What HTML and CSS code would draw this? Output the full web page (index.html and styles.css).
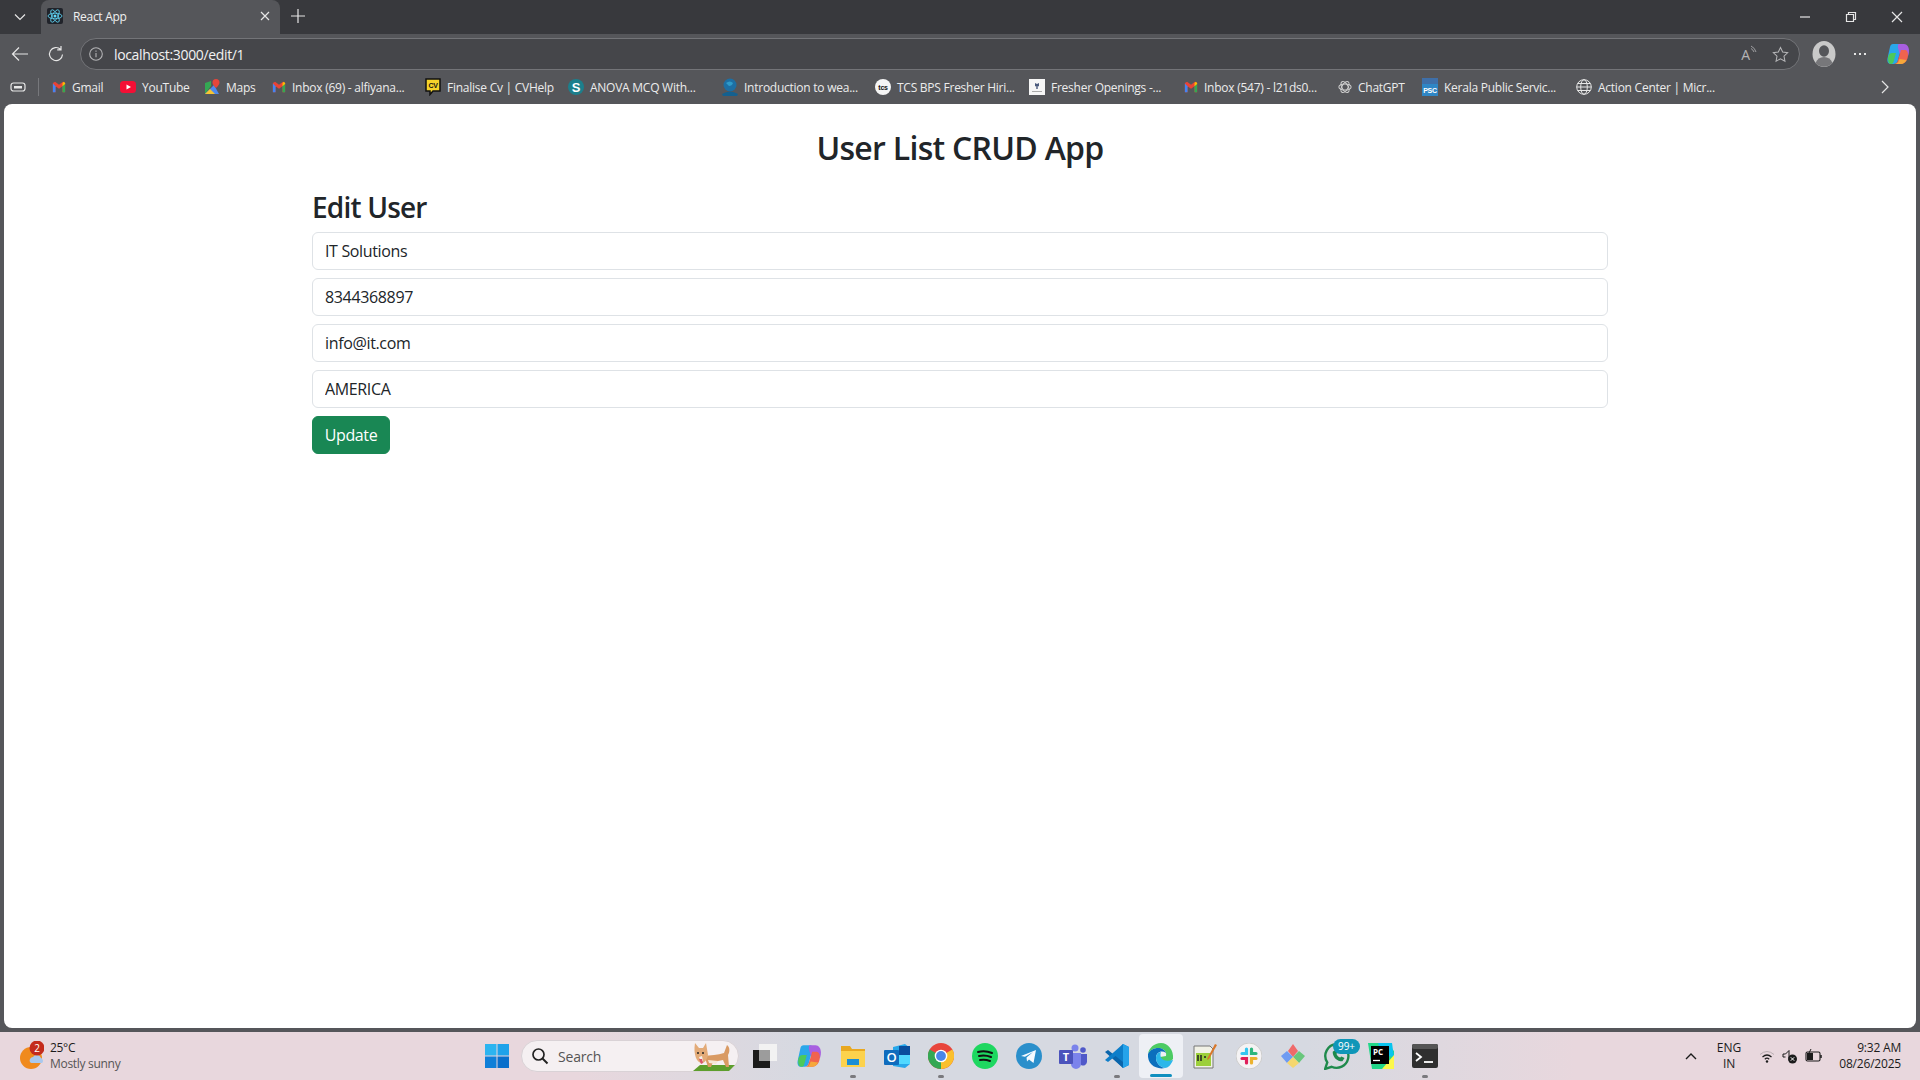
FILE: index.html
```html
<!DOCTYPE html>
<html lang="en">
<head>
    <meta charset="UTF-8">
    <title>React App</title>
    <link rel="stylesheet" href="styles.css">
</head>
<body>
    <div class="tabstrip">
        <div class="tab-menu">
            <svg width="14" height="14" viewBox="0 0 14 14"><path d="M2 4.500l5 5 5-5" class="line"/></svg>
        </div>
        <div class="tab">
            <svg class="favicon" width="16" height="16" viewBox="0 0 16 16">
                <rect width="16" height="16" rx="2" fill="#20232a"/>
                <circle cx="8" cy="8" r="1.500" fill="#61dafb"/>
                <g fill="none" stroke="#61dafb" stroke-width="0.8">
                    <ellipse cx="8" cy="8" rx="7" ry="2.800"/>
                    <ellipse cx="8" cy="8" rx="7" ry="2.800" transform="rotate(60 8 8)"/>
                    <ellipse cx="8" cy="8" rx="7" ry="2.800" transform="rotate(120 8 8)"/>
                </g>
            </svg>
            <span class="tab-title">React App</span>
            <svg width="10" height="10" viewBox="0 0 10 10"><path d="M1 1l8 8M9 1l-8 8" class="line"/></svg>
        </div>
        <div class="new-tab">
            <svg width="16" height="16" viewBox="0 0 16 16"><path d="M8 1v14M1 8h14" class="line"/></svg>
        </div>
        <div class="window-controls">
            <svg width="12" height="12" viewBox="0 0 12 12"><path d="M1 6h10" class="line"/></svg>
            <svg width="12" height="12" viewBox="0 0 12 12"><path d="M1.500 3.500h7v7h-7zM3.500 3.500v-2h7v7h-2" class="line"/></svg>
            <svg width="12" height="12" viewBox="0 0 12 12"><path d="M1 1l10 10M11 1l-10 10" class="line"/></svg>
        </div>
    </div>

    <div class="toolbar">
        <svg class="nav-icon" width="18" height="18" viewBox="0 0 18 18"><path d="M17 9H1.500M8 2.500L1.500 9 8 15.500" class="line"/></svg>
        <svg class="nav-icon" width="18" height="18" viewBox="0 0 18 18"><path d="M15.500 9.500a6.500 6.500 0 1 1-2-5.200M14 1v3.800h-3.800" class="line"/></svg>
        <div class="address-bar">
            <svg width="14" height="14" viewBox="0 0 14 14"><circle cx="7" cy="7" r="6.300" class="line-info"/><path d="M7 6v4.200M7 3.600v1.100" class="line-info"/></svg>
            <span class="url">localhost:3000/edit/1</span>
            <span class="read-aloud">A<svg width="8" height="10" viewBox="0 0 8 10"><path d="M1 1q4 2 5 6M1 3.500q2 1 3 3.500" class="line-thin"/></svg></span>
            <svg width="17" height="17" viewBox="0 0 18 18"><path d="M9 1.500l2.300 4.900 5.300.7-3.900 3.700 1 5.300L9 13.500l-4.700 2.600 1-5.300L1.400 7.100l5.300-.7z" class="line-info"/></svg>
        </div>
        <div class="toolbar-right">
            <svg width="24" height="26" viewBox="0 0 24 26">
                <ellipse cx="12" cy="13" rx="11.500" ry="13" fill="#c9c9c9"/>
                <ellipse cx="12" cy="10" rx="5" ry="5.800" fill="#55565a"/>
                <path d="M3.500 22c1.500-4 4.500-6 8.500-6s7 2 8.500 6a12 13 0 0 1-17 0z" fill="#77777a"/>
            </svg>
            <span class="dots"><i></i><i></i><i></i></span>
            <svg width="24" height="24" viewBox="0 0 24 24"><use href="#copilot-icon"/></svg>
        </div>
    </div>

    <div class="bookmarks">
        <svg class="collections" width="16" height="14" viewBox="0 0 16 14"><rect x="1" y="3" width="14" height="8" rx="2.500" class="line"/><path d="M4 6h8v2.500H4z" fill="#e8e8e8"/></svg>
        <span class="bookmark-divider"></span>

        <div class="bookmark b-gmail"><svg width="14" height="14" viewBox="0 0 16 16"><use href="#gmail-icon"/></svg>Gmail</div>
        <div class="bookmark b-youtube"><svg width="16" height="14" viewBox="0 0 16 14"><rect y="1" width="16" height="12" rx="3.500" fill="#f40f35"/><path d="M6.500 4.500L11 7l-4.500 2.500z" fill="#fff"/></svg>YouTube</div>
        <div class="bookmark b-maps"><svg width="16" height="16" viewBox="0 0 16 16"><path d="M1 15V4l6-2v5z" fill="#34a853"/><path d="M1 15l9-9 5 9z" fill="#4d8af0"/><path d="M1 15l5-5 5 5z" fill="#f7c531"/><path d="M12 0a3.500 3.500 0 0 0-3.500 3.500C8.500 6 12 9 12 9s3.500-3 3.500-5.500A3.500 3.500 0 0 0 12 0z" fill="#e5463b"/></svg>Maps</div>
        <div class="bookmark b-inbox"><svg width="14" height="14" viewBox="0 0 16 16"><use href="#gmail-icon"/></svg>Inbox (69) - alfiyana...</div>
        <div class="bookmark b-cvhelp"><svg width="16" height="18" viewBox="0 0 16 18"><path d="M1 1h14v12H8l-3 3.500V13H1z" fill="#f6d42a" stroke="#111" stroke-width="1.500"/><text x="8" y="10" class="icon-text">CV</text></svg>Finalise Cv | CVHelp</div>
        <div class="bookmark b-anova"><svg width="16" height="16" viewBox="0 0 16 16"><circle cx="8" cy="8" r="8" fill="#1c7f8c"/><text x="8" y="12.500" class="anova-s">S</text></svg>ANOVA MCQ With...</div>
        <div class="bookmark b-intro"><svg width="16" height="18" viewBox="0 0 16 18"><circle cx="8" cy="7" r="6.500" fill="#1d6fa4"/><path d="M0 16q8-5 16 0l-1 2H1z" fill="#14608f"/><path d="M4 5q4-3 7 0-1 3-4 3z" fill="#2f9bc9"/></svg>Introduction to wea...</div>
        <div class="bookmark b-tcs"><svg width="16" height="16" viewBox="0 0 16 16"><circle cx="8" cy="8" r="8" fill="#f5f5f5"/><text x="8" y="10.500" class="icon-text">tcs</text></svg>TCS BPS Fresher Hiri...</div>
        <div class="bookmark b-fresher"><svg width="16" height="16" viewBox="0 0 16 16"><rect width="16" height="16" fill="#f6f6f6"/><path d="M6 4l2 1 2-1v3L8 8 6 7zM7.300 8h1.400v2H7.300z" fill="#4a5a7c"/><path d="M3 12.500h10" stroke="#aaa"/></svg>Fresher Openings -...</div>
        <div class="bookmark b-inbox2"><svg width="14" height="14" viewBox="0 0 16 16"><use href="#gmail-icon"/></svg>Inbox (547) - l21ds0...</div>
        <div class="bookmark b-chatgpt"><svg width="14" height="14" viewBox="0 0 16 16"><g fill="none" stroke="#cfcfcf" stroke-width="1.200"><ellipse cx="8" cy="8" rx="7" ry="3.500"/><ellipse cx="8" cy="8" rx="7" ry="3.500" transform="rotate(60 8 8)"/><ellipse cx="8" cy="8" rx="7" ry="3.500" transform="rotate(120 8 8)"/></g></svg>ChatGPT</div>
        <div class="bookmark b-kerala"><svg width="16" height="18" viewBox="0 0 16 18"><rect width="16" height="18" fill="#2f86c5"/><rect width="16" height="6" fill="#3f6fa8"/><text x="8" y="15" class="psc-text">PSC</text></svg>Kerala Public Servic...</div>
        <div class="bookmark b-action"><svg width="16" height="16" viewBox="0 0 16 16"><g fill="none" stroke="#e6e6e6" stroke-width="1"><circle cx="8" cy="8" r="7.300"/><ellipse cx="8" cy="8" rx="3.300" ry="7.300"/><path d="M.7 8h14.600M1.700 4.500h12.600M1.700 11.500h12.600"/></g></svg>Action Center | Micr...</div>
        <svg class="bookmark-more" width="10" height="14" viewBox="0 0 10 14"><path d="M2 1l6 6-6 6" class="line"/></svg>
    </div>

    <div class="page">
        <div class="container">
            <h1>User List CRUD App</h1>
            <h2>Edit User</h2>
            <form class="user-form">
                <input class="form-control" type="text" value="IT Solutions">
                <input class="form-control" type="text" value="8344368897">
                <input class="form-control" type="text" value="info@it.com">
                <input class="form-control" type="text" value="AMERICA">
                <div><button class="btn-update" type="button">Update</button></div>
            </form>
        </div>
    </div>

    <div class="taskbar">
        <div class="weather">
            <svg class="weather-icon" width="24" height="30" viewBox="0 0 24 30">
                <circle cx="11" cy="17" r="11" fill="#f08a1d"/>
                <path d="M10 21a3.500 3.500 0 0 1 3-5 4.500 4.500 0 0 1 8 1 3 3 0 0 1 1 5H12a2 2 0 0 1-2-1z" fill="#a9c8ee"/>
                <circle cx="17" cy="7" r="7.500" fill="#c42b1c"/>
                <text x="17" y="10.500" class="weather-badge">2</text>
            </svg>
            <div class="weather-text">
                <span class="temp">25°C</span>
                <span class="sky">Mostly sunny</span>
            </div>
        </div>

        <div class="task-center">
            <svg class="start" width="24" height="24" viewBox="0 0 24 24">
                <rect width="11.500" height="11.500" fill="#2cb4f0"/>
                <rect x="12.500" width="11.500" height="11.500" fill="#1fa2ea"/>
                <rect y="12.500" width="11.500" height="11.500" fill="#0f7fd8"/>
                <rect x="12.500" y="12.500" width="11.500" height="11.500" fill="#0a6fcb"/>
            </svg>
            <div class="search-box">
                <svg width="18" height="18" viewBox="0 0 18 18"><circle cx="7.500" cy="7.500" r="5.500" fill="none" stroke="#222" stroke-width="1.700"/><path d="M11.500 11.500l5 5" stroke="#222" stroke-width="1.900"/></svg>
                <span class="search-label">Search</span>
                <svg class="corgi" width="46" height="30" viewBox="0 0 46 30">
                    <path d="M3 29l7-6h35l-6 6z" fill="#5d9e2d"/>
                    <path d="M14 14c6-1 14-1 20-3l3-8c3 2 3 7 1 10l1 12h-3l-3-7-10 2-2 5h-3l-2-6z" fill="#d99a63"/>
                    <path d="M18 18l10 1-2 3-7-1z" fill="#f6e6d6"/>
                    <path d="M5 1l4 5h4l3-5 2 12c-1 5-4 9-7 8-4-1-8-8-6-20z" fill="#e3ab78"/>
                    <path d="M9 15c1 2 2 5 4 4l-1-5z" fill="#f4f0ec"/>
                    <path d="M9 17l2 5 2-1-1-4z" fill="#d9556b"/>
                    <circle cx="8" cy="11" r="1" fill="#222"/>
                    <circle cx="13" cy="11" r="1" fill="#222"/>
                </svg>
            </div>
            <div class="task-slot">
                <svg width="26" height="26" viewBox="0 0 26 26"><rect x="1" y="7" width="17" height="18" fill="#1b1b1b"/><rect x="7" y="1" width="18" height="17" fill="#f2f2f2"/><rect x="7" y="7" width="11" height="11" fill="#9c9c9c"/></svg>
            </div>
            <div class="task-slot">
                <svg width="26" height="26" viewBox="0 0 24 24"><use href="#copilot-icon"/></svg>
            </div>
            <div class="task-slot running">
                <svg width="26" height="24" viewBox="0 0 26 24"><path d="M1 2h9l2 3h13v18H1z" fill="#e9a820"/><path d="M1 7h24v16H1z" fill="#fcd24d"/><rect x="7" y="15" width="12" height="6" fill="#1b8fd6"/></svg>
            </div>
            <div class="task-slot">
                <svg width="26" height="26" viewBox="0 0 26 26"><path d="M9 4l12-3 5 4v16l-5 4-12-2z" fill="#28a8ea"/><path d="M15 3h11v9H15z" fill="#0a4f9e"/><path d="M15 12h11v9H15z" fill="#50d9ff"/><rect y="7" width="15" height="15" rx="1" fill="#0f6cbd"/><text x="7.500" y="19" class="outlook-o">O</text></svg>
            </div>
            <div class="task-slot running">
                <svg width="26" height="26" viewBox="0 0 26 26"><circle cx="13" cy="13" r="13" fill="#e8453c"/><path d="M13 13L1.700 6.500A13 13 0 0 0 13 26z" fill="#34a853"/><path d="M13 13l11.300-6.500A13 13 0 0 1 13 26z" fill="#fbc02d"/><circle cx="13" cy="13" r="6.300" fill="#fff"/><circle cx="13" cy="13" r="4.900" fill="#4a86e8"/></svg>
            </div>
            <div class="task-slot">
                <svg width="26" height="26" viewBox="0 0 26 26"><circle cx="13" cy="13" r="13" fill="#1ed760"/><path d="M6 9q7-2 14 1M7 13q6-1.500 12 1M8 17q5-1 10 1" fill="none" stroke="#111" stroke-width="2" stroke-linecap="round"/></svg>
            </div>
            <div class="task-slot">
                <svg width="26" height="26" viewBox="0 0 26 26"><circle cx="13" cy="13" r="13" fill="#2a8fcb"/><path d="M5 13l15-6-2.500 13-4.500-3.500-2 2-.5-4 6.500-5.500-8 4.700z" fill="#f5fbff"/></svg>
            </div>
            <div class="task-slot">
                <svg width="28" height="26" viewBox="0 0 28 26"><circle cx="16" cy="5" r="3.500" fill="#7b83eb"/><circle cx="24" cy="7" r="2.800" fill="#5059c9"/><path d="M20 11h8v8a4 4 0 0 1-6 3z" fill="#5059c9"/><path d="M9 10h13v11a5 5 0 0 1-10 0z" fill="#7b83eb"/><rect y="7" width="14" height="14" rx="1" fill="#4b53bc"/><text x="7" y="18" class="teams-t">T</text></svg>
            </div>
            <div class="task-slot running">
                <svg width="26" height="26" viewBox="0 0 26 26"><path d="M19 1l6 3v18l-6 3L8 14z" fill="#0e7ec9"/><path d="M19 1v24l6-3V4z" fill="#25a3ea"/><path d="M1 9l3-2 15 12v6z" fill="#0a65ab"/><path d="M1 17l3 2L19 7V1z" fill="#0e7ec9"/></svg>
            </div>
            <div class="task-slot active-app">
                <svg width="28" height="28" viewBox="0 0 28 28">
                    <path d="M26 17C27 8 21 1 14 1 7 1 2 6 1 12c2-4 6-6 10-6 6 0 9 4 8 8l-6 1c0 4 9 7 13 2z" fill="#4ccb63"/>
                    <path d="M1 12c2-4 6-6 10-6 4 0 7 2 8 5-4-3-10-1-10 5 0 5 4 9 9 10-9 2-18-4-17-14z" fill="#0b6fbd"/>
                    <path d="M18 26c-5-1-9-5-9-10 0-3 2-6 5-6-2 5 1 11 12 8-2 5-5 8-8 8z" fill="#2bb7ea"/>
                </svg>
            </div>
            <div class="task-slot">
                <svg width="26" height="26" viewBox="0 0 26 26"><path d="M2 3h16l3 3v19H2z" fill="#f1f1e6" stroke="#777"/><rect x="4" y="10" width="15" height="13" fill="#9ccf3a"/><path d="M6 12v6M9 12v6M12 14h2" stroke="#222" stroke-width="1.500"/><path d="M23 1l2 1-8 14-2 1 .5-2z" fill="#d8772a"/></svg>
            </div>
            <div class="task-slot">
                <svg width="26" height="26" viewBox="0 0 26 26"><circle cx="13" cy="13" r="13" fill="#f5f3f4" stroke="#ccc"/><g stroke-width="3.200" stroke-linecap="round"><path d="M10.500 6v4.500H6" stroke="#36c5f0" fill="none"/><path d="M20 10.500h-4.500V6" stroke="#2eb67d" fill="none"/><path d="M15.500 20v-4.500H20" stroke="#ecb22e" fill="none"/><path d="M6 15.500h4.500V20" stroke="#e01e5a" fill="none"/></g></svg>
            </div>
            <div class="task-slot">
                <svg width="26" height="26" viewBox="0 0 26 26"><path d="M8 8l5-7 5 7-5 6z" fill="#ef6a6a"/><path d="M1 13l6-5 6 6-6 6z" fill="#6f9bf2"/><path d="M13 14l6-6 6 5-6 7z" fill="#69c77c"/><path d="M7 20l6-6 6 6-6 5z" fill="#f5d76e"/></svg>
            </div>
            <div class="task-slot">
                <svg class="whatsapp" width="26" height="27" viewBox="2 5 24 25"><path d="M14 6a11 11 0 0 0-9 17l-2 6 6-2a11 11 0 1 0 5-21z" fill="none" stroke="#1f8a4c" stroke-width="2.200"/><path d="M10 13c0 5 4 9 9 9l2-3-3-1.500-1 1c-2-.5-3-2-3.500-3.500l1-1-1.500-3z" fill="#1f8a4c"/></svg>
                <span class="whatsapp-badge">99+</span>
            </div>
            <div class="task-slot">
                <svg width="26" height="26" viewBox="0 0 26 26"><path d="M0 0h18l8 8v12l-6 6H4z" fill="#21d789"/><path d="M10 0h14l2 14-12-2z" fill="#09c4ee"/><path d="M14 26l12-14v14z" fill="#fcf84a"/><rect x="3" y="3" width="18" height="18" fill="#000"/><text x="5" y="12" class="pc-text">PC</text><path d="M5 17.500h7" stroke="#fff" stroke-width="1.300"/></svg>
            </div>
            <div class="task-slot running">
                <svg width="26" height="24" viewBox="0 0 26 24"><rect width="26" height="24" rx="2" fill="#2f2f2f"/><rect width="26" height="5" rx="2" fill="#555"/><path d="M4 9l5 4-5 4" fill="none" stroke="#fff" stroke-width="1.800"/><path d="M12 18h9" stroke="#fff" stroke-width="1.800"/></svg>
            </div>
        </div>

        <div class="tray">
            <svg class="tray-chevron" width="12" height="8" viewBox="0 0 12 8"><path d="M1 7l5-5 5 5" fill="none" stroke="#1b1b1b" stroke-width="1.400"/></svg>
            <div class="lang"><span>ENG</span><span>IN</span></div>
            <div class="tray-icons">
                <svg width="16" height="14" viewBox="0 0 16 14"><path d="M1 5.500q7-6 14 0" fill="none" stroke="#b9aeb2"/><path d="M3.500 8q4.500-4 9 0M5.800 10.200q2.200-2 4.400 0" fill="none" stroke="#1b1b1b" stroke-width="1.200"/><circle cx="8" cy="12.500" r="1.200" fill="#1b1b1b"/></svg>
                <svg width="16" height="15" viewBox="0 0 16 15"><path d="M1 5h2.500L7 1.500V9" fill="none" stroke="#1b1b1b" stroke-width="1"/><path d="M1 5v3h2.500" fill="none" stroke="#1b1b1b" stroke-width="1"/><circle cx="10.500" cy="10" r="4.500" fill="#1b1b1b"/><path d="M8.800 8.300l3.400 3.400M12.200 8.300l-3.400 3.400" stroke="#fff"/></svg>
                <svg width="18" height="14" viewBox="0 0 18 14"><rect x="1" y="3" width="14" height="9" rx="1.500" fill="none" stroke="#1b1b1b" stroke-width="1.100"/><path d="M16 6v3" stroke="#1b1b1b" stroke-width="1.500"/><path d="M2 4h6v7H2z" fill="#1b1b1b"/><path d="M6 0L3 6h3l-1 5" fill="none" stroke="#1b1b1b"/></svg>
            </div>
            <div class="clock"><span>9:32 AM</span><span>08/26/2025</span></div>
        </div>
    </div>

    <svg width="0" height="0" class="svg-defs">
        <symbol id="gmail-icon" viewBox="0 0 16 16">
            <path d="M1 3.500V14h3V7l4 3 4-3v7h3V3.500L12.500 2 8 5.500 3.500 2z" fill="#ea4335"/>
            <path d="M1 4v10h3V7z" fill="#4285f4"/>
            <path d="M12 7v7h3V4z" fill="#34a853"/>
            <path d="M12 3.500V7l3-2.500V3.500L13.500 2z" fill="#fbbc04"/>
        </symbol>
        <symbol id="copilot-icon" viewBox="0 0 24 24">
            <path d="M7 2h6c1.500 0 2.300 1 2.700 2.300L12 18c-.6 2.500-2 4-4.500 4H5C2 22 1 19.500 1.500 16.500L4 5c.4-2 1.500-3 3-3z" fill="#2aa7ea"/>
            <path d="M2 17c0-3 1-6 4-6h4l-2.500 9c-.4 1.300-1.200 2-2.500 2-2 0-3-2-3-5z" fill="#4cc95a"/>
            <path d="M13 2h5c3 0 5 3 5 7 0 2-.5 4-1 5l-8-1-2-7c-.4-2 0-4 1-4z" fill="#a85fe0"/>
            <path d="M15 8h4c2 0 3 2 3 5 0 5-3 9-7 9H8c2 0 3.500-1.500 4-4z" fill="#f0634f"/>
            <path d="M9 22h6c2.500 0 4.500-2 5.500-4l-7-1c-.6 2.500-2 5-4.500 5z" fill="#f6a83a"/>
        </symbol>
    </svg>
</body>
</html>
```

FILE: styles.css
```css
* {
    box-sizing: border-box;
}

html, body {
    margin: 0;
    height: 100%;
}

body {
    width: 1920px;
    height: 1080px;
    overflow: hidden;
    display: flex;
    flex-direction: column;
    background-color: #55565a;
    font-family: "Open Sans", "Noto Sans", sans-serif;
}

svg {
    display: block;
    flex-shrink: 0;
}

.svg-defs {
    position: absolute;
}

.line {
    fill: none;
    stroke: #e6e6e6;
    stroke-width: 1.2;
}

.line-info {
    fill: none;
    stroke: #b4b4b6;
    stroke-width: 1.1;
}

.line-thin {
    fill: none;
    stroke: #b4b4b6;
    stroke-width: 0.8;
}

.icon-text {
    font-family: "Liberation Sans", sans-serif;
    font-size: 7px;
    font-weight: 700;
    fill: #111;
    text-anchor: middle;
}

.anova-s {
    font-family: "Liberation Sans", sans-serif;
    font-size: 13px;
    font-weight: 700;
    fill: #fff;
    text-anchor: middle;
}

.psc-text {
    font-family: "Liberation Sans", sans-serif;
    font-size: 7px;
    font-weight: 700;
    fill: #fff;
    text-anchor: middle;
}

/* tab strip */
.tabstrip {
    height: 34px;
    background-color: #38393d;
    display: flex;
    align-items: center;
    padding-left: 13px;
}

.tab-menu {
    width: 28px;
}

.tab {
    width: 239px;
    height: 34px;
    background-color: #55565a;
    border-radius: 8px 8px 0 0;
    display: flex;
    align-items: center;
    padding: 0 10px 2px 6px;
    gap: 10px;
    color: #f0f0f0;
    font-size: 12px;
}

.tab-title {
    flex-grow: 1;
    letter-spacing: -0.3px;
}

.new-tab {
    margin: 0 0 2px 10px;
}

.window-controls {
    margin-left: auto;
    display: flex;
    gap: 34px;
    padding-right: 17px;
}

/* address row */
.toolbar {
    height: 36px;
    background-color: #55565a;
    display: flex;
    align-items: center;
    padding: 4px 6px 0 11px;
}

.nav-icon {
    margin-right: 18px;
}

.address-bar {
    width: 1720px;
    height: 32px;
    margin-left: -3px;
    background-color: #45464a;
    border: 1px solid #737478;
    border-radius: 16px;
    display: flex;
    align-items: center;
    padding: 0 10px 0 8px;
}

.url {
    flex-grow: 1;
    margin-left: 11px;
    color: #f2f2f2;
    font-size: 14px;
    letter-spacing: -0.35px;
}

.read-aloud {
    display: flex;
    color: #b4b4b6;
    font-size: 14px;
    margin-right: 14px;
}

.toolbar-right {
    display: flex;
    align-items: center;
    margin-left: 12px;
}

.dots {
    display: flex;
    gap: 3px;
    margin: 0 20px 0 18px;
}

.dots i {
    width: 2px;
    height: 2px;
    background-color: #e6e6e6;
}

/* bookmarks row */
.bookmarks {
    height: 34px;
    background-color: #55565a;
    display: flex;
    align-items: center;
    padding-left: 10px;
}

.bookmark-divider {
    width: 1px;
    height: 18px;
    background-color: #77787c;
    margin: 0 13px 0 12px;
}

.bookmark {
    display: flex;
    align-items: center;
    gap: 6px;
    color: #ececec;
    font-size: 12px;
    letter-spacing: -0.25px;
    white-space: nowrap;
}

.b-gmail { width: 68px; }
.b-youtube { width: 84px; }
.b-maps { width: 68px; }
.b-inbox { width: 153px; }
.b-cvhelp { width: 143px; }
.b-anova { width: 154px; }
.b-intro { width: 153px; }
.b-tcs { width: 154px; }
.b-fresher { width: 155px; }
.b-inbox2 { width: 154px; }
.b-chatgpt { width: 84px; }
.b-kerala { width: 154px; }
.b-action { width: 160px; }

.bookmark-more {
    margin-left: 144px;
}

/* page */
.page {
    height: 924px;
    margin: 0 4px;
    background-color: #fff;
    border-radius: 8px;
    color: #212529;
}

.container {
    width: 1296px;
    margin: 0 auto;
}

h1 {
    margin: 0;
    padding-top: 22px;
    font-size: 32px;
    font-weight: 600;
    line-height: 44px;
    text-align: center;
    letter-spacing: -0.72px;
}

h2 {
    margin: 0 0 5px;
    padding-top: 18px;
    font-size: 28px;
    font-weight: 600;
    line-height: 39px;
    letter-spacing: -0.8px;
}

.user-form {
    display: flex;
    flex-direction: column;
    gap: 8px;
}

.form-control {
    width: 100%;
    height: 38px;
    padding: 6px 12px;
    font-family: inherit;
    font-size: 16px;
    color: #212529;
    letter-spacing: -0.35px;
    background-color: #fff;
    border: 1px solid #dee2e6;
    border-radius: 6px;
    outline: none;
}

.btn-update {
    width: 78px;
    height: 38px;
    padding: 0;
    font-family: inherit;
    font-size: 16px;
    letter-spacing: -0.35px;
    color: #fff;
    background-color: #198754;
    border: 1px solid #198754;
    border-radius: 6px;
}

/* taskbar */
.taskbar {
    height: 48px;
    margin-top: 4px;
    background: linear-gradient(90deg, #e8d7dd 0%, #e8d7dd 30%, #d6d9e1 42%, #d6d9e1 68%, #e8d7dd 82%, #e8d7dd 100%);
    display: flex;
    align-items: center;
}

.weather {
    width: 485px;
    display: flex;
    align-items: center;
    padding-left: 20px;
    gap: 6px;
}

.weather-badge {
    font-family: "Open Sans", sans-serif;
    font-size: 10px;
    fill: #fff;
    text-anchor: middle;
}

.weather-text {
    display: flex;
    flex-direction: column;
    font-size: 12px;
    line-height: 16px;
    letter-spacing: -0.3px;
}

.temp {
    color: #1b1b1b;
}

.sky {
    color: #555;
}

.task-center {
    display: flex;
    align-items: center;
}

.start {
    margin-right: 12px;
}

.search-box {
    width: 218px;
    height: 32px;
    margin-right: 4px;
    background-color: #f5f0f2;
    border: 1px solid #d9d2d6;
    border-radius: 16px;
    display: flex;
    align-items: center;
    padding-left: 9px;
    gap: 9px;
    position: relative;
}

.search-label {
    color: #555;
    font-size: 14px;
    letter-spacing: -0.2px;
}

.corgi {
    position: absolute;
    right: 2px;
    top: 1px;
}

.task-slot {
    width: 44px;
    height: 44px;
    display: flex;
    align-items: center;
    justify-content: center;
    position: relative;
}

.task-slot.running::after {
    content: "";
    position: absolute;
    bottom: 0;
    left: 19px;
    width: 6px;
    height: 3px;
    border-radius: 2px;
    background-color: #7a7a7e;
}

.active-app {
    background-color: #eef0f5;
    border-radius: 4px;
}

.active-app::after {
    content: "";
    position: absolute;
    bottom: 1px;
    left: 11px;
    width: 22px;
    height: 3px;
    border-radius: 2px;
    background-color: #0f8fbf;
}

.outlook-o {
    font-family: "Open Sans", sans-serif;
    font-size: 13px;
    font-weight: 600;
    fill: #fff;
    text-anchor: middle;
}

.teams-t {
    font-family: "Open Sans", sans-serif;
    font-size: 11px;
    font-weight: 700;
    fill: #fff;
    text-anchor: middle;
}

.pc-text {
    font-family: "Open Sans", sans-serif;
    font-size: 8px;
    font-weight: 700;
    fill: #fff;
}

.whatsapp-badge {
    position: absolute;
    top: 5px;
    right: -1px;
    width: 27px;
    height: 15px;
    border-radius: 8px;
    background-color: #0f96b8;
    color: #fff;
    font-size: 10px;
    line-height: 15px;
    text-align: center;
}

.tray {
    margin-left: auto;
    display: flex;
    align-items: center;
    padding-right: 19px;
    color: #1b1b1b;
    font-size: 12px;
}

.tray-chevron {
    margin-right: 20px;
}

.lang {
    display: flex;
    flex-direction: column;
    align-items: center;
    line-height: 16px;
    margin-right: 18px;
}

.tray-icons {
    display: flex;
    align-items: center;
    gap: 7px;
    margin-right: 16px;
}

.clock {
    display: flex;
    flex-direction: column;
    align-items: flex-end;
    line-height: 16px;
    letter-spacing: -0.2px;
}
```
